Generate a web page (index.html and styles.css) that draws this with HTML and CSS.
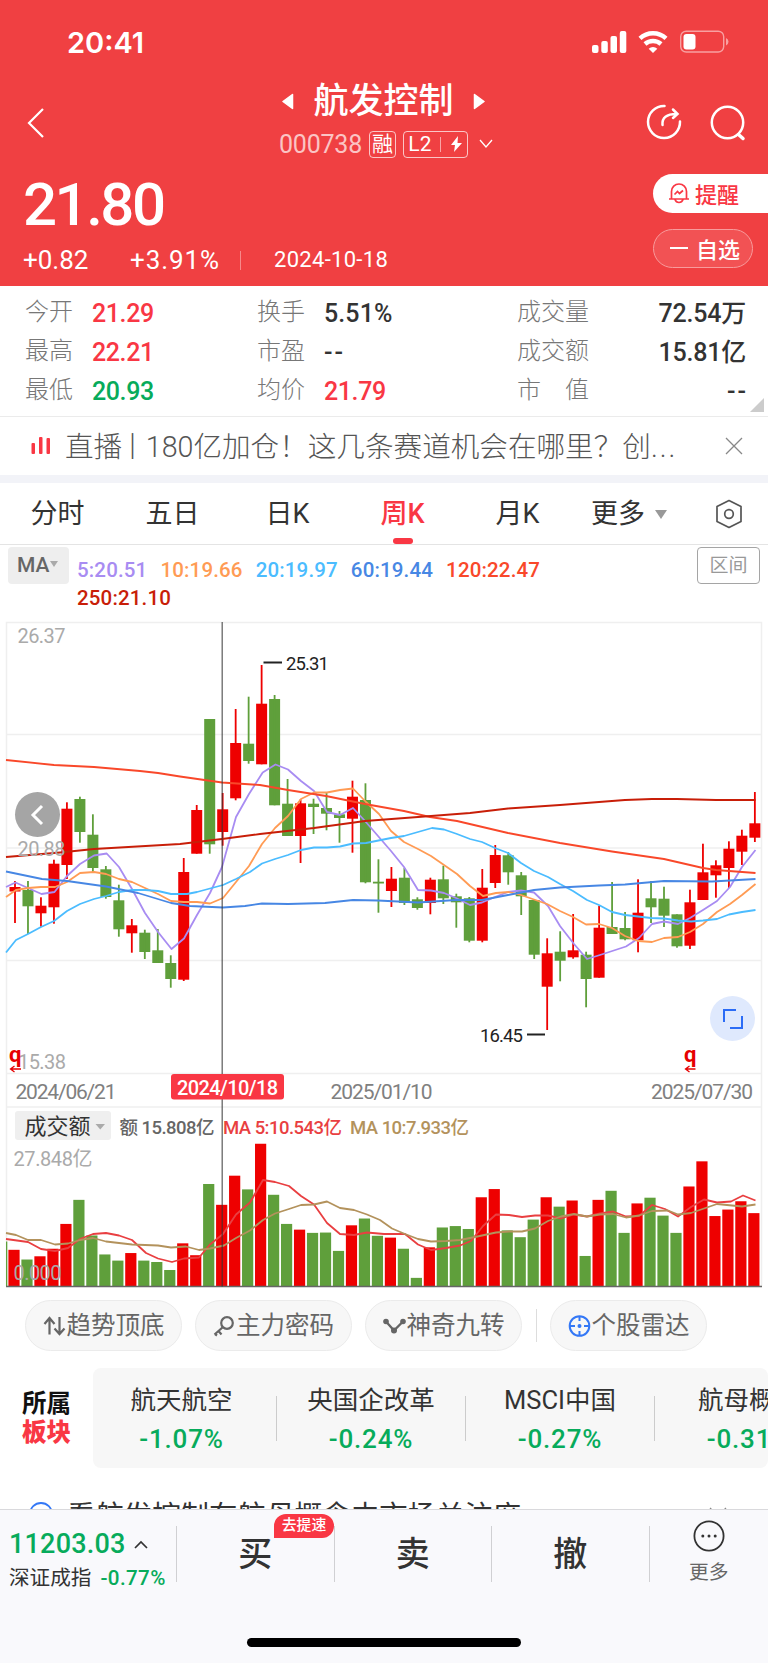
FILE: index.html
```html
<!DOCTYPE html>
<html lang="zh-CN">
<head>
  <meta charset="UTF-8">
  <meta name="viewport" content="width=device-width, initial-scale=1.0">
  <title>航发控制 000738</title>
  <link rel="stylesheet" href="styles.css">
</head>
<body>
  <div class="app">
    <header class="header">
      <div class="status-bar">
        <span class="clock">20:41</span>
        <svg class="status-icons" width="140" height="26" viewBox="0 0 140 26">
          <g fill="#fff">
            <rect x="0" y="15" width="6.5" height="8" rx="2"/>
            <rect x="9.3" y="11" width="6.5" height="12" rx="2"/>
            <rect x="18.5" y="6" width="6.5" height="17" rx="2"/>
            <rect x="27.8" y="1" width="6.5" height="22" rx="2"/>
            <path d="M61 23l-4.3-4.3a6.3 6.3 0 0 1 8.6 0z"/>
          </g>
          <g fill="none" stroke="#fff" stroke-width="4.4">
            <path d="M48 8.4a19 19 0 0 1 26 0"/>
            <path d="M53 14a12 12 0 0 1 16 0"/>
          </g>
          <rect x="88.7" y="1.2" width="43" height="20.8" rx="5.5" fill="none" stroke="#fff" stroke-opacity=".5" stroke-width="1.4"/>
          <rect x="91.5" y="4" width="12" height="15.5" rx="3" fill="#fff"/>
          <path d="M134 8v7.5q2.5-1 2.5-3.7T134 8z" fill="#fff" fill-opacity=".5"/>
        </svg>
      </div>

      <div class="title-row">
        <svg class="back" width="20" height="32" viewBox="0 0 20 32"><path d="M17 2L3 16l14 14" fill="none" stroke="#fff" stroke-width="2.2"/></svg>
        <div class="title-box">
          <div class="stock-name">
            <svg width="12" height="17" viewBox="0 0 12 17"><path d="M10.5 1.5v14L1 8.5z" fill="#fff" stroke="#fff" stroke-width="1.5" stroke-linejoin="round"/></svg>
            <h1>航发控制</h1>
            <svg width="12" height="17" viewBox="0 0 12 17"><path d="M1.5 1.5v14L11 8.5z" fill="#fff" stroke="#fff" stroke-width="1.5" stroke-linejoin="round"/></svg>
          </div>
          <div class="stock-code">
            <span class="code">000738</span>
            <span class="tag">融</span>
            <span class="tag tag-l2">L2<i></i><svg width="13" height="18" viewBox="0 0 13 18"><path d="M8 1L1 10h4l-1 7 8-9H7.5z" fill="#fff"/></svg></span>
            <svg class="chev" width="14" height="10" viewBox="0 0 14 10"><path d="M1 1l6 7 6-7" fill="none" stroke="#fff" stroke-width="1.3"/></svg>
          </div>
        </div>
        <div class="title-icons">
          <svg width="38" height="38" viewBox="0 0 38 38" fill="none" stroke="#fff" stroke-width="2.5" stroke-linecap="round">
            <path d="M19.500 3A16 16 0 1 0 35 18.500"/>
            <path d="M17.500 22q-1-11 14-11M28 6.500l4.500 4.500-4.500 4"/>
          </svg>
          <svg width="38" height="38" viewBox="0 0 38 38" fill="none" stroke="#fff" stroke-width="2.5" stroke-linecap="round">
            <circle cx="18.500" cy="19.500" r="15.700"/>
            <path d="M29.5 31.500l4.5 4" stroke-width="3.5"/>
          </svg>
        </div>
      </div>

      <div class="price-row">
        <div class="price-box">
          <div class="price">21.80</div>
          <div class="change">
            <span class="chg">+0.82</span>
            <span class="pct">+3.91%</span>
            <span class="date">2024-10-18</span>
          </div>
        </div>
        <div class="header-btns">
          <div class="btn-alert">
            <svg width="22" height="22" viewBox="0 0 22 22" fill="none" stroke="#f93744" stroke-width="1.7">
              <path d="M1 17h20M3.5 17V9.500a7.5 7.5 0 0 1 15 0V17M7 17.5q1 3 4 3t4-3"/>
              <path d="M6.5 12.5l3-3 2 2 3.5-3"/>
            </svg>
            <span>提醒</span>
          </div>
          <div class="btn-watch"><i></i><span>自选</span></div>
        </div>
      </div>
    </header>

    <section class="quotes">
      <div class="q-label">今开</div><div class="q-val up">21.29</div>
      <div class="q-label">换手</div><div class="q-val wide">5.51%</div>
      <div class="q-label">成交量</div><div class="q-val last">72.54万</div>
      <div class="q-label">最高</div><div class="q-val up">22.21</div>
      <div class="q-label">市盈</div><div class="q-val dash">--</div>
      <div class="q-label">成交额</div><div class="q-val last">15.81亿</div>
      <div class="q-label">最低</div><div class="q-val down">20.93</div>
      <div class="q-label">均价</div><div class="q-val up">21.79</div>
      <div class="q-label">市　值</div><div class="q-val last dash">--</div>
      <span class="corner"></span>
    </section>

    <section class="news">
      <svg width="20" height="18" viewBox="0 0 20 18" fill="#f93744"><rect x="0.5" y="6" width="3.5" height="11" rx="1"/><rect x="8" y="0" width="3.5" height="17" rx="1"/><rect x="15.5" y="1" width="3.5" height="16" rx="1"/></svg>
      <span class="news-text">直播<i>丨</i>180亿加仓！这几条赛道机会在哪里？创<i class="dots">...</i></span>
      <svg width="18" height="18" viewBox="0 0 18 18"><path d="M1 1l16 16M17 1L1 17" stroke="#888" stroke-width="1.3"/></svg>
    </section>

    <nav class="tabs">
      <span class="tab">分时</span>
      <span class="tab">五日</span>
      <span class="tab">日K</span>
      <span class="tab active">周K</span>
      <span class="tab">月K</span>
      <span class="tab tab-more">更多<i class="caret"></i></span>
      <svg width="28" height="30" viewBox="0 0 28 30" fill="none" stroke="#555" stroke-width="1.7" stroke-linejoin="round"><path d="M14 1.5l12 6v15l-12 6-12-6v-15z"/><circle cx="14" cy="15" r="4.3"/></svg>
    </nav>

    <section class="indicators">
      <span class="select">MA<i class="caret"></i></span>
      <div class="ma-list">
        <span class="ma5">5:20.51</span>
        <span class="ma10">10:19.66</span>
        <span class="ma20">20:19.97</span>
        <span class="ma60">60:19.44</span>
        <span class="ma120">120:22.47</span>
        <span class="ma250">250:21.10</span>
      </div>
      <span class="range-btn">区间</span>
    </section>

    <section class="chart">
      <svg class="chart-svg" width="768" height="678" viewBox="0 610 768 678">
        <g class="grid">
          <path d="M6.500 1286V622.500H761.500V1286M6.500 734.500H761.500M6.500 848H761.500M6.500 960.500H761.500M6.500 1073.500H761.500M6.500 1107H761.500"/>
        </g>
        <g id="candles"></g>
        <g id="volumes"></g>
        <g id="lines" class="lines"></g>
        <path class="base" d="M6 1286.500H762"/>
        <path class="cross" d="M222.200 622V1286.500"/>

        <g class="axis">
          <text x="17.5" y="642.5" textLength="48">26.37</text>
          <text x="17.5" y="855.5" textLength="48">20.88</text>
          <text x="18" y="1069" textLength="48">15.38</text>
          <text x="13.5" y="1166" textLength="79">27.848亿</text>
          <text x="13.5" y="1279.5" textLength="48">0.000</text>
        </g>
        <g class="dates">
          <text x="15.5" y="1098.5" textLength="101">2024/06/21</text>
          <text x="330.5" y="1098.5" textLength="102">2025/01/10</text>
          <text x="651" y="1098.5" textLength="102">2025/07/30</text>
        </g>
        <rect x="171" y="1074" width="113" height="25.5" rx="3" fill="#f93744"/>
        <text class="cur-date" x="177" y="1095" textLength="101">2024/10/18</text>

        <g class="marks">
          <path d="M263.500 662.500h18.500M527 1034.500h18"/>
          <text x="286" y="670" textLength="43">25.31</text>
          <text x="480" y="1042" textLength="43">16.45</text>
        </g>
        <g class="ex">
          <text x="9" y="1061.5">q</text>
          <text x="684" y="1061.5">q</text>
          <path d="M21 1069H10.500m4-3l-4 3 4 3M695.500 1069H685.500m4-3l-4 3 4 3"/>
        </g>

        <rect x="15" y="1111" width="96" height="29" rx="3" fill="#efefef"/>
        <path d="M95.500 1124h9.500l-4.750 5.500z" fill="#aaa"/>
        <g class="vol-legend">
          <text x="24.5" y="1133.5" class="vol-name" textLength="66">成交额</text>
          <text x="119.5" y="1133.5" fill="#666" textLength="95">额 15.808亿</text>
          <text x="223" y="1133.5" fill="#e93f41" textLength="119">MA 5:10.543亿</text>
          <text x="350" y="1133.5" fill="#b3925c" textLength="119">MA 10:7.933亿</text>
        </g>
      </svg>
      <div class="scroll-back">
        <svg width="14" height="22" viewBox="0 0 14 22"><path d="M12 2L3 11l9 9" fill="none" stroke="#fff" stroke-width="3"/></svg>
      </div>
      <div class="expand">
        <svg width="22" height="22" viewBox="0 0 22 22"><path d="M2 14V2h12M20 8v12H8" fill="none" stroke="#2b6cf6" stroke-width="2"/></svg>
      </div>
    </section>

    <section class="tools">
      <span class="tool">
        <svg width="23" height="22" viewBox="0 0 23 22" fill="none" stroke="#666" stroke-width="2.2"><path d="M6.5 19.5V3M1.5 9l5-6 5 6M16.5 2v17M11.5 13.5l5 5.5 5-5.5"/></svg>趋势顶底
      </span>
      <span class="tool">
        <svg width="22" height="22" viewBox="0 0 22 22" fill="none" stroke="#666" stroke-width="2.2"><circle cx="14" cy="8" r="5.8"/><path d="M10 12l-8.5 7.5M5.500 16l3 3.5M2 19l2 1.5"/></svg>主力密码
      </span>
      <span class="tool">
        <svg width="23" height="18" viewBox="0 0 23 18"><path d="M3 4.5l8 9L20 4.5" fill="none" stroke="#666" stroke-width="2.3"/><g fill="#666"><circle cx="3" cy="4.5" r="2.8"/><circle cx="11" cy="13.5" r="3"/><circle cx="20" cy="4.5" r="2.8"/></g></svg>神奇九转
      </span>
      <i class="tool-sep"></i>
      <span class="tool">
        <svg width="23" height="24" viewBox="0 0 23 24" fill="none" stroke="#3478f6" stroke-width="2"><circle cx="11.5" cy="12" r="9.8"/><path d="M11.5 2v5M11.5 17v5M1.5 12h5.500M16 12h5.500"/><circle cx="11.5" cy="12" r="1" fill="#3478f6"/></svg>个股雷达
      </span>
    </section>

    <section class="sectors">
      <div class="sectors-title">所属<br><b>板块</b></div>
      <div class="sectors-list">
        <div class="sector"><span>航天航空</span><em>-1.07%</em></div>
        <div class="sector"><span>央国企改革</span><em>-0.24%</em></div>
        <div class="sector"><span>MSCI中国</span><em>-0.27%</em></div>
        <div class="sector"><span>航母概念</span><em>-0.31%</em></div>
      </div>
    </section>

    <section class="tip">
      <svg width="24" height="24" viewBox="0 0 24 24"><circle cx="12" cy="12" r="11" fill="none" stroke="#3478f6" stroke-width="1.8"/></svg>
      <span>看航发控制在航母概念中市场关注度</span>
      <svg class="tip-close" width="18" height="18" viewBox="0 0 18 18"><path d="M1 1l16 16M17 1L1 17" stroke="#888" stroke-width="1.3"/></svg>
    </section>

    <footer class="footer">
      <div class="trade-bar">
        <div class="index-box">
          <div class="index-val">11203.03<svg width="14" height="9" viewBox="0 0 14 9"><path d="M1 8l6-6 6 6" fill="none" stroke="#333" stroke-width="1.7"/></svg></div>
          <div class="index-name">深证成指<em>-0.77%</em></div>
        </div>
        <div class="trade">买<span class="badge">去提速</span></div>
        <div class="trade">卖</div>
        <div class="trade">撤</div>
        <div class="trade-more">
          <svg width="32" height="32" viewBox="0 0 32 32"><circle cx="16" cy="16" r="14.6" fill="none" stroke="#333" stroke-width="1.8"/><g fill="#333"><circle cx="9.8" cy="16" r="1.5"/><circle cx="16" cy="16" r="1.5"/><circle cx="22.2" cy="16" r="1.5"/></g></svg>
          <span>更多</span>
        </div>
      </div>
      <div class="home-bar"></div>
    </footer>
  </div>
  <script src="chart.js"></script>
</body>
</html>
```
FILE: styles.css
```css
* {
  box-sizing: border-box;
}

body {
  margin: 0;
  background: #fff;
  color: #333;
  font-family: Roboto, "Noto Sans CJK SC", sans-serif;
}

svg {
  display: block;
  flex: none;
}

i, em {
  font-style: normal;
}

.app {
  width: 768px;
  height: 1663px;
  overflow: hidden;
  display: flex;
  flex-direction: column;
}

.up { color: #f93744; }
.down { color: #07ab5b; }

.caret {
  display: inline-block;
  border: 5px solid transparent;
  border-top: 6px solid #aaa;
  border-bottom: 0;
}

/* Header */
.header {
  height: 286px;
  flex: none;
  background: #f04042;
  color: #fff;
}

.status-bar {
  height: 76px;
  padding: 30px 47px 0 67px;
  display: flex;
  justify-content: space-between;
}

.status-icons {
  margin-right: -11px;
}

.clock {
  font: 600 29px/26px Inter, sans-serif;
}

.title-row {
  height: 88px;
  padding: 0 21px 0 26px;
  display: grid;
  grid-template-columns: 1fr auto 1fr;
}

.back {
  margin-top: 31px;
}

.title-box {
  margin-right: 1px;
}

.stock-name {
  display: flex;
  justify-content: center;
  align-items: center;
  gap: 19px;
  height: 50px;
  padding-right: 5px;
}

.stock-name h1 {
  margin: 0;
  font-size: 35px;
  line-height: 50px;
  font-weight: 500;
  padding-top: 2px;
}

.stock-code {
  display: flex;
  align-items: center;
  height: 36px;
}

.code {
  font-size: 25px;
  letter-spacing: -0.2px;
  color: #fbc4c4;
  margin-right: 7px;
}

.tag {
  height: 27px;
  width: 27px;
  margin-right: 7px;
  border: 1.3px solid rgba(255, 255, 255, 0.7);
  border-radius: 4px;
  font-size: 21px;
  line-height: 25px;
  text-align: center;
}

.tag-l2 {
  width: 65px;
  display: flex;
  align-items: center;
  justify-content: space-around;
  margin-right: 11px;
}

.tag-l2 i {
  width: 1px;
  height: 15px;
  background: #f9a5a6;
}

.title-icons {
  display: flex;
  justify-content: flex-end;
  gap: 26px;
  padding-top: 27px;
}

.price-row {
  display: flex;
  justify-content: space-between;
}

.price-box {
  padding: 9px 0 0 23px;
}

.price {
  font-size: 60px;
  line-height: 64px;
  font-weight: 500;
  letter-spacing: -2.5px;
}

.change {
  display: flex;
  align-items: center;
  font-size: 26px;
  line-height: 30px;
  margin-top: 8px;
}

.chg { width: 107px; }

.pct {
  letter-spacing: 0.9px;
  width: 109px;
}

.date {
  font-size: 22px;
  letter-spacing: 0.3px;
  padding-left: 35px;
  background: linear-gradient(#f7898a, #f7898a) 1px 6px / 1px 19px no-repeat;
}

.header-btns {
  width: 115px;
  padding-top: 10px;
  font-size: 22px;
}

.btn-alert {
  height: 39px;
  display: flex;
  align-items: center;
  gap: 5px;
  padding: 0 0 1px 15px;
  background: #fff;
  color: #f93744;
  border-radius: 20px 0 0 20px;
  font-weight: 500;
}

.btn-watch {
  width: 100px;
  height: 39px;
  margin-top: 16px;
  display: flex;
  align-items: center;
  gap: 8px;
  padding: 0 0 2px 16px;
  background: #f25254;
  border: 1px solid #f89b9c;
  border-radius: 20px;
  font-weight: 500;
}

.btn-watch i {
  width: 18px;
  height: 2px;
  background: #fff;
}

/* Quotes */
.quotes {
  position: relative;
  height: 131px;
  flex: none;
  padding: 8px 22px 0 25px;
  display: grid;
  grid-template-columns: 67px 165px 67px 193px 90px 1fr;
  grid-auto-rows: 39px;
  border-bottom: 1px solid #ebebeb;
}

.q-label {
  font-size: 24px;
  line-height: 36px;
  font-weight: 300;
  color: #777;
}

.q-val {
  font-size: 25px;
  line-height: 39px;
  font-weight: 500;
  letter-spacing: -0.4px;
}

.q-val.wide {
  letter-spacing: 0.1px;
}

.q-val.last {
  text-align: right;
  letter-spacing: -0.2px;
}

.q-val.dash {
  letter-spacing: 2px;
  margin-right: -2px;
}

.corner {
  position: absolute;
  right: 4px;
  bottom: 4px;
  border-left: 14px solid transparent;
  border-bottom: 14px solid #ccc;
}

.news {
  height: 66px;
  flex: none;
  display: flex;
  align-items: center;
  padding: 0 25px 0 31px;
  border-bottom: 8px solid #f2f3f8;
}

.news-text {
  flex: 1;
  padding: 2px 0 0 14px;
  font-size: 28.6px;
  line-height: 56px;
  font-weight: 300;
  color: #555;
  white-space: nowrap;
}

.news-text i {
  margin: 0 -1px 0 -4px;
}

.news-text .dots {
  margin: 0;
  letter-spacing: 2px;
}

/* Period tabs */
.tabs {
  height: 62px;
  flex: none;
  display: flex;
  align-items: center;
  border-bottom: 1px solid #e4e4e4;
  font-size: 27px;
}

.tab {
  position: relative;
  width: 115px;
  height: 61px;
  line-height: 63px;
  text-align: center;
}

.tab.active {
  color: #f93744;
  font-weight: 500;
}

.tab.active::after {
  content: "";
  position: absolute;
  left: 48px;
  bottom: 0;
  width: 20px;
  height: 6px;
  border-radius: 3px;
  background: #f93744;
}

.tab-more {
  width: 140px;
  text-align: left;
  padding-left: 16px;
}

.tab-more .caret {
  margin-left: 10px;
  vertical-align: 4px;
  border-width: 9px 6.5px 0;
  border-top-color: #999;
}

/* Moving average legend */
.indicators {
  height: 65px;
  flex: none;
  display: flex;
  align-items: flex-start;
  padding: 2px 8px 0;
}

.select {
  width: 61px;
  height: 37px;
  line-height: 37px;
  padding-left: 9px;
  border-radius: 4px;
  background: #eee;
  color: #666;
  font-size: 21px;
  font-weight: 500;
  white-space: nowrap;
}

.select .caret {
  vertical-align: 5px;
  border-width: 6px 4.5px 0;
  margin-left: 1px;
}

.ma-list {
  flex: 1;
  display: flex;
  flex-wrap: wrap;
  column-gap: 13px;
  padding: 9px 100px 0 8px;
  font-size: 20.5px;
  line-height: 28px;
  font-weight: 500;
  letter-spacing: 0.15px;
}

.ma5 { color: #a88cf2; }
.ma10 { color: #ff9b54; }
.ma20 { color: #4bbcff; }
.ma60 { color: #4787e4; }
.ma120 { color: #f9482a; }
.ma250 { color: #c81e08; }

.range-btn {
  width: 63px;
  height: 37px;
  border: 1px solid #a5a5a5;
  border-radius: 4px;
  text-align: center;
  line-height: 36px;
  font-size: 19px;
  color: #999;
}

/* Chart */
.chart {
  position: relative;
  height: 677px;
  flex: none;
}

.grid path {
  fill: none;
  stroke: #efefef;
  stroke-width: 1.5;
}

.lines polyline {
  fill: none;
  stroke-width: 1.8;
  stroke-linejoin: round;
}

.base {
  stroke: #666;
  stroke-width: 1.3;
}

.cross {
  stroke: #333;
  stroke-opacity: 0.75;
  stroke-width: 1.3;
}

.axis {
  font-size: 20px;
  fill: #aaa;
}

.dates {
  font-size: 21px;
  fill: #808080;
}

.cur-date {
  font-size: 20px;
  font-weight: 500;
  fill: #fff;
}

.marks {
  font-size: 18.5px;
  fill: #222;
}

.marks path {
  stroke: #222;
  stroke-width: 2;
}

.ex {
  font-size: 22px;
  font-weight: 700;
  fill: #e60000;
}

.ex path {
  fill: none;
  stroke: #e60000;
  stroke-width: 1.3;
}

.vol-legend {
  font-size: 18.5px;
  font-weight: 500;
}

.vol-name {
  font-size: 22px;
  font-weight: 400;
  fill: #333;
}

.scroll-back,
.expand {
  position: absolute;
  width: 45px;
  height: 45px;
  border-radius: 50%;
  display: flex;
  align-items: center;
  justify-content: center;
}

.scroll-back {
  left: 15px;
  top: 182px;
  padding-right: 2px;
  background: #a5a5a5;
}

.expand {
  left: 710px;
  top: 386px;
  background: #dfe9fd;
}

/* Tool buttons */
.tools {
  height: 81px;
  flex: none;
  display: flex;
  align-items: flex-start;
  padding: 13px 0 0 25px;
}

.tool {
  width: 157px;
  height: 51px;
  margin-right: 13px;
  display: flex;
  align-items: center;
  justify-content: center;
  gap: 1px;
  border: 1px solid #ebebeb;
  border-radius: 26px;
  background: #f7f7f7;
  color: #666;
  font-size: 24.5px;
  white-space: nowrap;
  line-height: 48px;
}

.tool-sep {
  width: 1px;
  height: 33px;
  margin: 9px 13px 0 1px;
  background: #ddd;
}

/* Related sectors */
.sectors {
  height: 100px;
  flex: none;
  display: flex;
}

.sectors-title {
  width: 93px;
  padding: 21px 0 0 22px;
  font-size: 24.5px;
  line-height: 29px;
  font-weight: 700;
  color: #111;
}

.sectors-title b {
  color: #f93744;
}

.sectors-list {
  width: 675px;
  display: flex;
  overflow: hidden;
  border-radius: 8px;
  background: #f7f7f7;
}

.sector {
  position: relative;
  width: 189px;
  flex: none;
  text-align: center;
  padding: 13px 1px 0 0;
}

.sector:first-child {
  width: 184px;
  padding-right: 7px;
}

.sector:not(:last-child)::after {
  content: "";
  position: absolute;
  right: 0;
  top: 28px;
  width: 1px;
  height: 45px;
  background: #ccc;
}

.sector span,
.sector em {
  display: block;
  font-size: 25.5px;
  line-height: 39px;
}

.sector em {
  font-size: 26px;
  font-weight: 500;
  letter-spacing: 0.8px;
  color: #07ab5b;
}

.tip {
  height: 41px;
  flex: none;
  display: flex;
  padding: 34px 0 0 29px;
  overflow: hidden;
}

.tip span {
  width: 620px;
  padding: 1px 0 0 14px;
  font-size: 28.4px;
  line-height: 28px;
}

.tip-close {
  margin: 5px 0 0 36px;
}

/* Footer */
.footer {
  height: 154px;
  flex: none;
  background: #f9f9fc;
  border-top: 1px solid #d9d9dc;
}

.trade-bar {
  display: flex;
  height: 128px;
  padding-top: 16px;
}

.index-box {
  width: 177px;
  height: 56px;
  padding-left: 9px;
  border-right: 1px solid #d0d0d3;
  white-space: nowrap;
}

.index-val {
  display: flex;
  align-items: center;
  font-size: 27px;
  line-height: 36px;
  font-weight: 500;
  letter-spacing: 0.2px;
  color: #07ab5b;
}

.index-val svg {
  margin-left: 8px;
}

.index-name {
  font-size: 20.6px;
  line-height: 32px;
}

.index-name em {
  margin-left: 9px;
  font-weight: 500;
  letter-spacing: 0.4px;
  color: #07ab5b;
}

.trade {
  position: relative;
  width: 157.5px;
  height: 56px;
  border-right: 1px solid #d0d0d3;
  text-align: center;
  font-size: 34px;
  line-height: 56px;
  font-weight: 500;
}

.badge {
  position: absolute;
  left: 97px;
  top: -12px;
  width: 60px;
  height: 24px;
  border-radius: 12px 12px 12px 0;
  background: #f93744;
  color: #fff;
  font-size: 14.8px;
  line-height: 23px;
}

.trade-more {
  flex: 1;
  display: flex;
  flex-direction: column;
  align-items: center;
  margin-top: -6px;
  font-size: 19.8px;
  line-height: 32px;
  color: #666;
}

.trade-more span {
  margin-top: 5px;
}

.home-bar {
  width: 274px;
  height: 9px;
  margin: 0 auto;
  border-radius: 5px;
  background: #000;
}
```
FILE: chart.js
```javascript
const NS = 'http://www.w3.org/2000/svg';
const RED = '#ee0000';
const GREEN = '#5f9f3b';
const STEP = 12.98;
const VOL_BASE = 1286.5;
const VOL_SCALE = 1.079;

// [color, body top, body bottom, high, low]
const candles = [
  ['r', 887, 891.5, 881, 923], ['g', 890, 906.3, 881, 934], ['r', 905.7, 913.3, 897.3, 926.7],
  ['r', 863.7, 907.3, 859.7, 923.7], ['r', 808.7, 865, 802.3, 879], ['g', 799, 832, 796.7, 842.7],
  ['g', 834.7, 868, 814.3, 872], ['g', 869.3, 897, 866, 898.7], ['g', 900.3, 929.3, 884.7, 936.7],
  ['r', 925.3, 933.3, 919, 952.7], ['g', 932.7, 952, 929.7, 959], ['g', 950.3, 963, 929, 963],
  ['g', 963, 979, 955.3, 987.7], ['r', 872, 979.7, 858, 981], ['r', 810, 853.7, 805, 853.7],
  ['g', 719, 844.3, 719, 853.7], ['r', 809.3, 832, 793, 845.7], ['r', 743, 798.3, 709, 800.3],
  ['g', 743.7, 761, 696.7, 763.7], ['r', 703.7, 764.3, 665, 764.3], ['g', 699, 805.3, 695, 805.3],
  ['g', 803.7, 836, 779, 836], ['r', 803.3, 836, 799.3, 863], ['g', 803.7, 807, 798.7, 834],
  ['g', 808, 813.7, 793, 830.3], ['g', 814.3, 818, 811, 842.7], ['r', 796.7, 818.7, 780.7, 852.7],
  ['g', 800, 882.3, 783.3, 883.3], ['g', 881.7, 883.5, 859.3, 912.7], ['r', 878.7, 891, 867, 907],
  ['g', 877.7, 903, 868, 905], ['g', 899.3, 908, 897.3, 909.7], ['r', 879.7, 903, 877.7, 914.3],
  ['g', 879.3, 898.3, 865.7, 904], ['g', 896.3, 902.3, 893.7, 927.7], ['g', 898.3, 940.7, 897, 942.3],
  ['r', 887.7, 940.7, 869, 942.3], ['r', 855, 883, 845, 888], ['g', 855.3, 872.3, 852, 884.7],
  ['g', 875.3, 896.3, 872, 915], ['g', 900, 954.7, 900, 959], ['r', 953.3, 986.7, 938.3, 1030],
  ['g', 951.7, 960.7, 931.3, 981.3], ['r', 950.3, 957.3, 914, 958.7], ['g', 954.7, 979, 951.7, 1007.3],
  ['r', 927.7, 977.7, 905.7, 977.7], ['g', 927, 934, 882, 934], ['g', 928, 939.3, 912, 940.3],
  ['r', 912.7, 940.3, 879.3, 952.3], ['g', 898.3, 907.3, 881, 923], ['g', 898.7, 915.7, 886.7, 927],
  ['g', 914.3, 946.3, 914.3, 947.7], ['r', 902.3, 945.7, 889.7, 949], ['r', 872.3, 900, 843.7, 900],
  ['r', 865.3, 875.3, 860.3, 897.7], ['r', 848.7, 868, 841.3, 888], ['r', 835.7, 851.7, 829.7, 865],
  ['r', 823.3, 837.7, 792, 842]
];

// bar heights, same order as the candles
const volumes = [
  34, 25, 28, 35, 58, 80.3, 47.3, 29.7, 24, 31, 24, 22.7, 15.3, 40, 29, 95, 75.7, 102.7, 90, 132.3,
  85, 58, 52.7, 49.7, 50, 33, 56.7, 63, 47, 45.3, 35, 8, 36.3, 54.7, 56, 53.3, 82.7, 90.3, 52, 45.7,
  62, 82.7, 74, 79.7, 28.3, 80.3, 88.7, 49.7, 77, 82.3, 65.7, 49.7, 92.7, 116, 65.3, 71.3, 79, 68
];
const volumeFlip = { 32: 'r', 33: 'g' };

// price moving averages: 5, 10, 20, 60, 120, 250
const priceLines = [
  ['#a88cf2', '6,887 15.5,882.5 28,888 41.5,894 54.5,892 67,876 80,864 94,855.5 106.7,853.5 119,867 132,889 145,913 158,932 171.5,949 184,938.5 197,915 210,893 222,867 236,817 249,794 262.7,772.5 275.5,764.5 288,769.5 301,781 314,791 327,812 340,815 353,808 365,821 378,836 391,851 404,867 418,890 431,890.5 444,893 456,898 470,905 482,902.5 495,897 508,892 521,890.5 534,892.5 548,906 560,926 574,944 587,959 600,955 626,946.5 639,938 652,924 664,921.5 678,924 690,918 703,910 717,901 730,887 742,867 755.5,850'],
  ['#ff9b54', '6,897 16,890 28,888 41,887 55,887 67,882 80,873 94,872 106,874 119,879 132,882 145,888 158,894 171,901 184,902 197,902 210,903.5 223,898 236,882 249,866 262,844 275,828 288,816 301,799 314,792.5 327,792.5 340,790 353,788.5 366,802 379,814 391,831 404,842 418,849 431,856 444,865 457,874 470,886 483,896 496,893 509,892 521,895 547,904 560,911 573,917 586,924.5 599,924 612,928 625,936 638,941 652,942 664,938 678,937 690,932 703,924 717,912 730,904 742,895 755.5,884'],
  ['#4bbcff', '6,952.5 16,940 28,934 41,927 54,921 67,911 80,904 94,899 106,896 119,892 132,890 145,890 158,891 171,894 187,894 197,892 210,888.5 223,885 236,879 250,872 262,863.5 275,859 288,855 301,850 314,847.5 327,847.5 340,846.5 353,843.5 366,843 391,838 404,836 418,832 432,828 444,829.5 457,834 470,839 482,842 495,848 508,853 521,863 534,871 548,877 560,884 573,891 587,900 599,905 612,912 625,915 651,918 664,918.5 678,920.5 691,921.5 703,920.5 717,919 729,914.5 742,912 755.5,910'],
  ['#4787e4', '6,871.5 42,879 67,881 106,886.5 138,893 171,903 190,906 223,907.5 245,906 262,903.5 288,904 325,903 353,900 378,900.5 418,902.5 456,900 482,900 508,895 534,890 560,887.5 599,885.5 625,884.5 664,881 712,881.5 730,880.5 755.5,879'],
  ['#f9482a', '6,760 54,765 94,767 140,771 158,773 180,776.5 222,782.5 260,785 288,790 326,796 365,804 404,811 430,817 457,821 508,833 560,843 612,851.5 664,859 703,868 716,870 755.5,873'],
  ['#c81e08', '6,857 60,852.5 94,849 180,844 222,839 260,834 314,828 365,821 418,817 470,813 508,808.5 560,805 625,800 652,799 677,799 716,800 755.5,800']
];

// turnover moving averages: 5, 10
const volumeLines = [
  ['#e93f41', '6,1239 28,1242 41,1249 55,1251 68,1248 80,1239 93,1234 106,1233 119,1235.5 132,1240 146,1253 158,1258.5 172,1262 184,1258.5 199,1257.5 210,1244.5 223,1234 236,1214.5 250,1202.5 263,1180 275,1182 289,1186 301,1196 314,1204.5 327,1223 340,1234 354,1235 367,1232.5 384,1234 405,1234 418,1244.5 431,1250 446,1248 460,1245.5 471,1241 483,1226 496,1214.5 509,1215 522,1217 535,1215.5 548,1215.5 561,1218.5 574,1214.5 587,1216.5 600,1213.5 613,1211.5 626,1216.5 639,1216 652,1205 665,1209 678,1216.5 691,1207 704,1199.5 717,1202.5 731,1201.5 743,1195.5 755.5,1200.5'],
  ['#b3925c', '6,1233 16,1235 28,1240 41,1240 55,1244.5 68,1243.5 80,1240 93,1238 106,1241.5 132,1244.5 158,1245.5 171,1247.5 186,1246.5 199,1250 210,1248.5 224,1245.5 236,1238 250,1230.5 263,1220 275,1213.5 289,1209 301,1205 314,1204.5 327,1201.5 340,1208 354,1210 367,1214.5 380,1220 392,1228.5 405,1234 418,1239 431,1241.5 446,1241 460,1240 475,1237 496,1232.5 509,1231.5 522,1231.5 535,1228.5 548,1221 561,1216.5 574,1214 587,1216.5 600,1214.5 613,1214 626,1217.5 639,1215.5 652,1211 668,1210.5 678,1214.5 691,1213 704,1208.5 717,1204 742,1206.5 755.5,1204.5']
];

function addRect(parent, x, y, w, h, fill) {
  const rect = document.createElementNS(NS, 'rect');
  rect.setAttribute('x', x);
  rect.setAttribute('y', y);
  rect.setAttribute('width', w);
  rect.setAttribute('height', h);
  rect.setAttribute('fill', fill);
  parent.appendChild(rect);
}

const candleGroup = document.getElementById('candles');
const volumeGroup = document.getElementById('volumes');
const lineGroup = document.getElementById('lines');

// last bar of the previous week, cut off by the left edge
addRect(volumeGroup, 6, VOL_BASE - 45, 1.3, 45, GREEN);

candles.forEach(([c, top, bottom, high, low], i) => {
  const color = c === 'r' ? RED : GREEN;
  const volColor = (volumeFlip[i] || c) === 'r' ? RED : GREEN;
  const x = 15 + i * STEP;
  const h = volumes[i] * VOL_SCALE;
  addRect(candleGroup, x - 5.5, top, 11, bottom - top, color);
  addRect(candleGroup, x - 0.9, high, 1.8, low - high, color);
  addRect(volumeGroup, x - 6.6, VOL_BASE - h, 11.2, h, volColor);
});

priceLines.concat(volumeLines).forEach(([color, points]) => {
  const line = document.createElementNS(NS, 'polyline');
  line.setAttribute('points', points);
  line.setAttribute('stroke', color);
  lineGroup.appendChild(line);
});
```
